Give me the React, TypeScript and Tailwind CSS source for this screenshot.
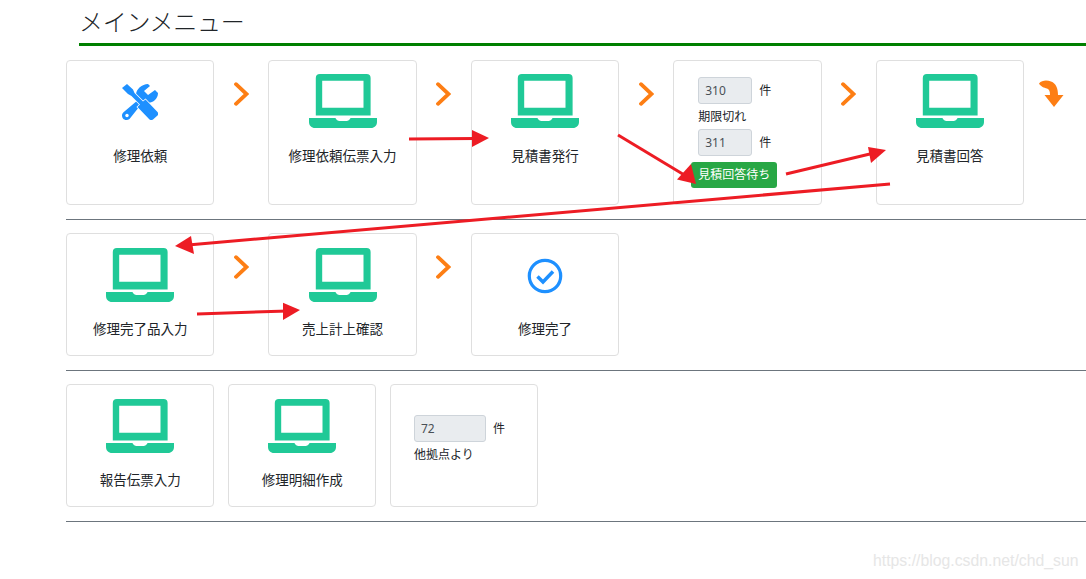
import type { ReactNode } from 'react'

function LaptopIcon() {
  return (
    <svg viewBox="0 0 67 54" preserveAspectRatio="none" className="w-[68px] h-[54px]" fill="#20c997">
      <path
        fillRule="evenodd"
        d="M10.7 0H56.7a4 4 0 0 1 4 4V41.500H6.7V4a4 4 0 0 1 4-4ZM13 6.700V33.700H53.700V6.700Z"
      />
      <path d="M0 44H26C27 46 28.500 47 30 47H37C38.500 47 40 46 41 44H67V48C67 51.500 64.500 54 61 54H6C2.500 54 0 51.500 0 48Z" />
    </svg>
  )
}

function ToolsIcon() {
  return (
    <svg viewBox="0 0 36 36" className="w-9 h-9 mt-0.5" fill="#1e90ff">
      {/* wrench */}
      <path d="M14 11C14 5 20 0 26 0L28 2L22 7L26 11L33 6L36 9C36 15 31 19 25 19C23.500 19 22.500 18.800 21 18L7.500 35C5.500 36.500 2.500 36.300 1 34.500C-.5 32.500 -.3 30 1.500 28.300L16 16C14.500 14.500 14 13 14 11Z" />
      <circle cx="5" cy="31.500" r="1.700" fill="#fff" />
      {/* screwdriver */}
      <path
        d="M0 4L5 0L11 5.500L12.500 9L21 17.500L23.500 15.500L35.500 28C36.500 29.200 36.300 30.500 35.500 31.500L31 35.500C30 36.300 28.500 36.300 27.500 35.500L15.500 23L18 20.500L9.500 12L6 10Z"
        stroke="#fff"
        strokeWidth="1.500"
        paintOrder="stroke"
      />
    </svg>
  )
}

function CheckIcon() {
  return (
    <svg viewBox="0 0 36 36" className="w-9 h-9 mt-0.5" fill="none" stroke="#1e90ff">
      <circle cx="18" cy="18" r="15.700" strokeWidth="3.200" />
      <path d="M10.500 18.500L16 24L26 13.500" strokeWidth="3.500" />
    </svg>
  )
}

function Chevron() {
  return (
    <div className="w-[54px] flex justify-center pt-[22px] shrink-0">
      <svg viewBox="0 0 15 24" className="w-[15px] h-6" fill="none" stroke="#fd7e14" strokeWidth="3.800" strokeLinecap="round" strokeLinejoin="miter">
        <path d="M2 2.200L12.500 12L2 21.800" />
      </svg>
    </div>
  )
}

function TurnArrow() {
  return (
    <div className="ml-[15px] pt-5 shrink-0">
      <svg viewBox="0 0 25 27" className="w-[25px] h-[27px]" fill="#fd7e14">
        <path d="M0 3.500C3 0 8 0 12 1.500C17 3.500 19 8 19 15H24.500L15 27L5.500 15H11C11 11 10 9 8 8.500C5 7.500 2 7 0 3.500Z" />
      </svg>
    </div>
  )
}

function Card({ className, children }: { className: string; children: ReactNode }) {
  return (
    <div className={`w-[148.4px] shrink-0 bg-white border border-[#dfdfdf] rounded ${className}`}>
      {children}
    </div>
  )
}

function MenuCard({ icon, label, tall }: { icon: ReactNode; label: string; tall?: boolean }) {
  return (
    <Card className={tall ? 'h-[145px] pt-[13px] flex flex-col items-center' : 'h-[123px] pt-3.5 flex flex-col items-center'}>
      <div className="h-[54px] flex items-center justify-center">{icon}</div>
      <p className={tall ? 'mt-[18px] text-[13.5px] leading-5 text-[#212529]' : 'mt-[17px] text-[13.5px] leading-5 text-[#212529]'}>{label}</p>
    </Card>
  )
}

function CountField({ value, width }: { value: string; width: string }) {
  return (
    <div className="flex items-center gap-[7px]">
      <div className={`${width} h-[27px] flex items-center pl-1.5 bg-[#e9ecef] border border-[#ced4da] rounded-[3px] text-xs text-[#495057]`}>
        {value}
      </div>
      <span className="text-xs text-[#212529]">件</span>
    </div>
  )
}

function Row({ children }: { children: ReactNode }) {
  return <div className="flex items-start pb-3.5 pt-[13px] border-b border-[#6c757d]">{children}</div>
}

function Annotation({ line, head }: { line: string; head: string }) {
  return (
    <>
      <polyline points={line} fill="none" stroke="#ed1c24" strokeWidth="3" />
      <polygon points={head} fill="#ed1c24" />
    </>
  )
}

export default function App() {
  return (
    <div className="relative w-[1086px] h-[579px] overflow-hidden bg-white font-['Noto_Sans','Noto_Sans_CJK_JP',sans-serif]">
      <div className="ml-[79px] h-[46px] border-b-[3px] border-[#008000]">
        <h1 className="pt-1 text-2xl leading-9 font-light tracking-[-0.25px] text-[#212529]">メインメニュー</h1>
      </div>

      <div className="ml-[66px]">
        <div className="flex items-start pt-3.5 pb-3.5 border-b border-[#6c757d]">
          <MenuCard tall icon={<ToolsIcon />} label="修理依頼" />
          <Chevron />
          <MenuCard tall icon={<LaptopIcon />} label="修理依頼伝票入力" />
          <Chevron />
          <MenuCard tall icon={<LaptopIcon />} label="見積書発行" />
          <Chevron />
          <Card className="h-[145px] pt-4 pl-[17px]">
            <div className="ml-[7px]">
              <CountField value="310" width="w-[54px]" />
              <p className="mt-[3px] text-xs leading-[19px] text-[#212529]">期限切れ</p>
              <div className="mt-[3px]">
                <CountField value="311" width="w-[54px]" />
              </div>
            </div>
            <div className="mt-1.5 w-[86px] h-[26px] flex items-center justify-center bg-[#28a745] rounded-[3px] text-xs text-white">
              見積回答待ち
            </div>
          </Card>
          <Chevron />
          <MenuCard tall icon={<LaptopIcon />} label="見積書回答" />
          <TurnArrow />
        </div>

        <Row>
          <MenuCard icon={<LaptopIcon />} label="修理完了品入力" />
          <Chevron />
          <MenuCard icon={<LaptopIcon />} label="売上計上確認" />
          <Chevron />
          <MenuCard icon={<CheckIcon />} label="修理完了" />
        </Row>

        <Row>
          <div className="flex gap-[13.6px]">
            <MenuCard icon={<LaptopIcon />} label="報告伝票入力" />
            <MenuCard icon={<LaptopIcon />} label="修理明細作成" />
            <Card className="h-[123px] pt-[30px] pl-[23px]">
              <CountField value="72" width="w-[72px]" />
              <p className="mt-[3px] text-xs leading-[19px] text-[#212529]">他拠点より</p>
            </Card>
          </div>
        </Row>
      </div>

      {/* hand-drawn red arrows on top of the screenshot */}
      <svg viewBox="0 0 1086 579" className="absolute inset-0 w-[1086px] h-[579px] pointer-events-none">
        <Annotation line="409,139 476,138.500" head="489,138 472,130 472,147" />
        <Annotation line="618,135 686,176" head="696,184 677,179.500 691,164" />
        <Annotation line="786,174 872,153.500" head="886,150 868,147 871,163" />
        <Annotation line="890,184 188,245" head="175,246 191,236 194,254" />
        <Annotation line="197,314 288,311" head="300,310 283,302.700 283,320" />
      </svg>

      <span className="absolute left-[873px] top-[551px] text-[15.8px] leading-5 font-['Liberation_Sans',sans-serif] text-[#e6e6e6]">
        https://blog.csdn.net/chd_sun
      </span>
    </div>
  )
}
